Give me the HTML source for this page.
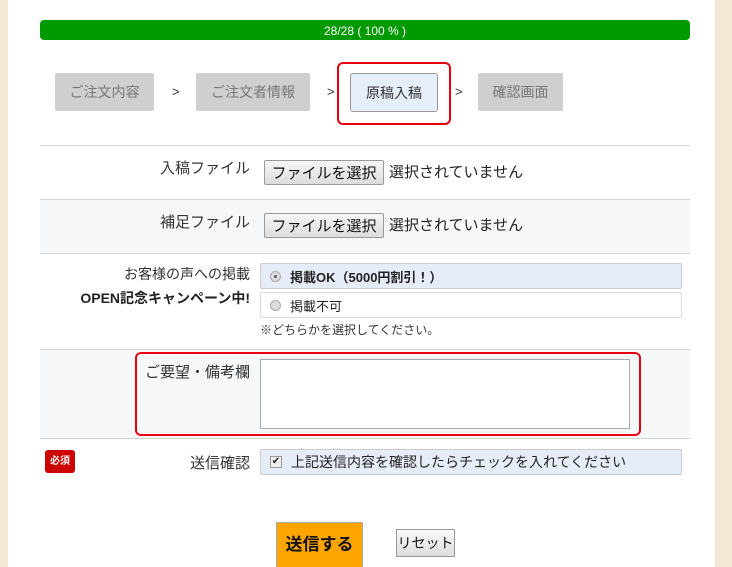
<!DOCTYPE html>
<html><head><meta charset="utf-8"><style>
*{margin:0;padding:0;box-sizing:border-box}
body{width:732px;height:567px;overflow:hidden;background:#f2e8d6;font-family:"Liberation Sans","Noto Sans CJK JP",sans-serif;color:#333;font-size:14px;position:relative}
.a{position:absolute}
.main{left:8px;top:0;width:707px;height:567px;background:#fff}
.step{height:38px;top:73px;background:#cfcfcf;color:#777;font-size:14px;display:flex;align-items:center;justify-content:center;border-radius:2px}
.gt{top:84px;font-size:13px;color:#333}
.hr{left:40px;width:650px;height:1px;background:#d4d4d4}
.lbl{right:482px;text-align:right;font-size:15px;white-space:nowrap}
.fbtn{left:264px;width:120px;height:25px;border:1px solid #999;background:linear-gradient(#f6f6f6,#ddd);font-size:15px;color:#111;display:flex;align-items:center;justify-content:center;border-radius:2px}
.ftxt{left:389px;font-size:15px;color:#222}
.opt{left:260px;width:422px;height:26px;border:1px solid #ddd;border-radius:2px;display:flex;align-items:center;padding-left:9px;font-size:13px;color:#222}
.rad{width:11px;height:11px;border-radius:50%;border:1px solid #aaa;background:#ddd;margin-right:9px;position:relative}
</style></head><body>
<div class="a main"></div>
<div class="a" style="left:40px;top:20px;width:650px;height:20px;background:#009900;border-radius:4px;color:#fff;font-size:12px;text-align:center;line-height:22px">28/28 ( 100 % )</div>
<div class="a step" style="left:55px;width:99px">ご注文内容</div>
<div class="a gt" style="left:172px">&gt;</div>
<div class="a step" style="left:196px;width:114px">ご注文者情報</div>
<div class="a gt" style="left:327px">&gt;</div>
<div class="a" style="left:337px;top:62px;width:114px;height:63px;border:2px solid #e60012;border-radius:6px"></div>
<div class="a step" style="left:350px;width:88px;background:#e6eefa;border:1px solid #999;color:#333;top:73px;height:39px;border-radius:3px">原稿入稿</div>
<div class="a gt" style="left:455px">&gt;</div>
<div class="a step" style="left:478px;width:85px">確認画面</div>

<div class="a hr" style="top:145px"></div>
<div class="a lbl" style="top:157px">入稿ファイル</div>
<div class="a fbtn" style="top:160px">ファイルを選択</div>
<div class="a ftxt" style="top:161px">選択されていません</div>

<div class="a" style="left:40px;top:200px;width:650px;height:53px;background:#f6f7f9"></div>
<div class="a hr" style="top:199px"></div>
<div class="a lbl" style="top:211px">補足ファイル</div>
<div class="a fbtn" style="top:213px">ファイルを選択</div>
<div class="a ftxt" style="top:214px">選択されていません</div>

<div class="a hr" style="top:253px"></div>
<div class="a lbl" style="top:264px;font-size:14px">お客様の声への掲載</div>
<div class="a lbl" style="top:288px;font-size:14px;font-weight:bold;color:#222">OPEN記念キャンペーン中!</div>
<div class="a opt" style="top:263px;background:#e6edf8;border-color:#ccc;font-weight:bold"><span class="rad"><span class="a" style="left:3px;top:3px;width:3px;height:3px;background:#555;border-radius:50%"></span></span>掲載OK（5000円割引！）</div>
<div class="a opt" style="top:292px;background:#fff">  <span class="rad"></span>掲載不可</div>
<div class="a" style="left:260px;top:321px;font-size:12px;color:#333">※どちらかを選択してください。</div>

<div class="a" style="left:40px;top:350px;width:650px;height:88px;background:#f6f7f9"></div>
<div class="a hr" style="top:349px"></div>
<div class="a lbl" style="top:361px">ご要望・備考欄</div>
<div class="a" style="left:260px;top:359px;width:370px;height:70px;border:1px solid #aaa;background:#fff"></div>
<div class="a" style="left:135px;top:352px;width:506px;height:84px;border:2px solid #e60012;border-radius:6px"></div>

<div class="a hr" style="top:438px"></div>
<div class="a" style="left:45px;top:450px;width:30px;height:23px;background:#cc0000;border-radius:3px;color:#fff;font-size:10px;font-weight:bold;text-align:center;line-height:23px">必須</div>
<div class="a lbl" style="top:452px">送信確認</div>
<div class="a opt" style="top:449px;background:#e6edf8;border-color:#ccc;font-size:14px"><span style="display:inline-block;width:12px;height:12px;border:1px solid #999;background:#eee;margin-right:9px;font-size:10px;line-height:10px;text-align:center">✔</span>上記送信内容を確認したらチェックを入れてください</div>

<div class="a" style="left:276px;top:522px;width:87px;height:45px;background:#ffa500;border:1px solid #aaa;border-bottom:none;font-size:17px;font-weight:bold;color:#111;text-align:center;line-height:43px">送信する</div>
<div class="a" style="left:396px;top:529px;width:59px;height:28px;border:1px solid #999;background:linear-gradient(#fafafa,#ddd);font-size:14px;text-align:center;line-height:26px;color:#111">リセット</div>
</body></html>
